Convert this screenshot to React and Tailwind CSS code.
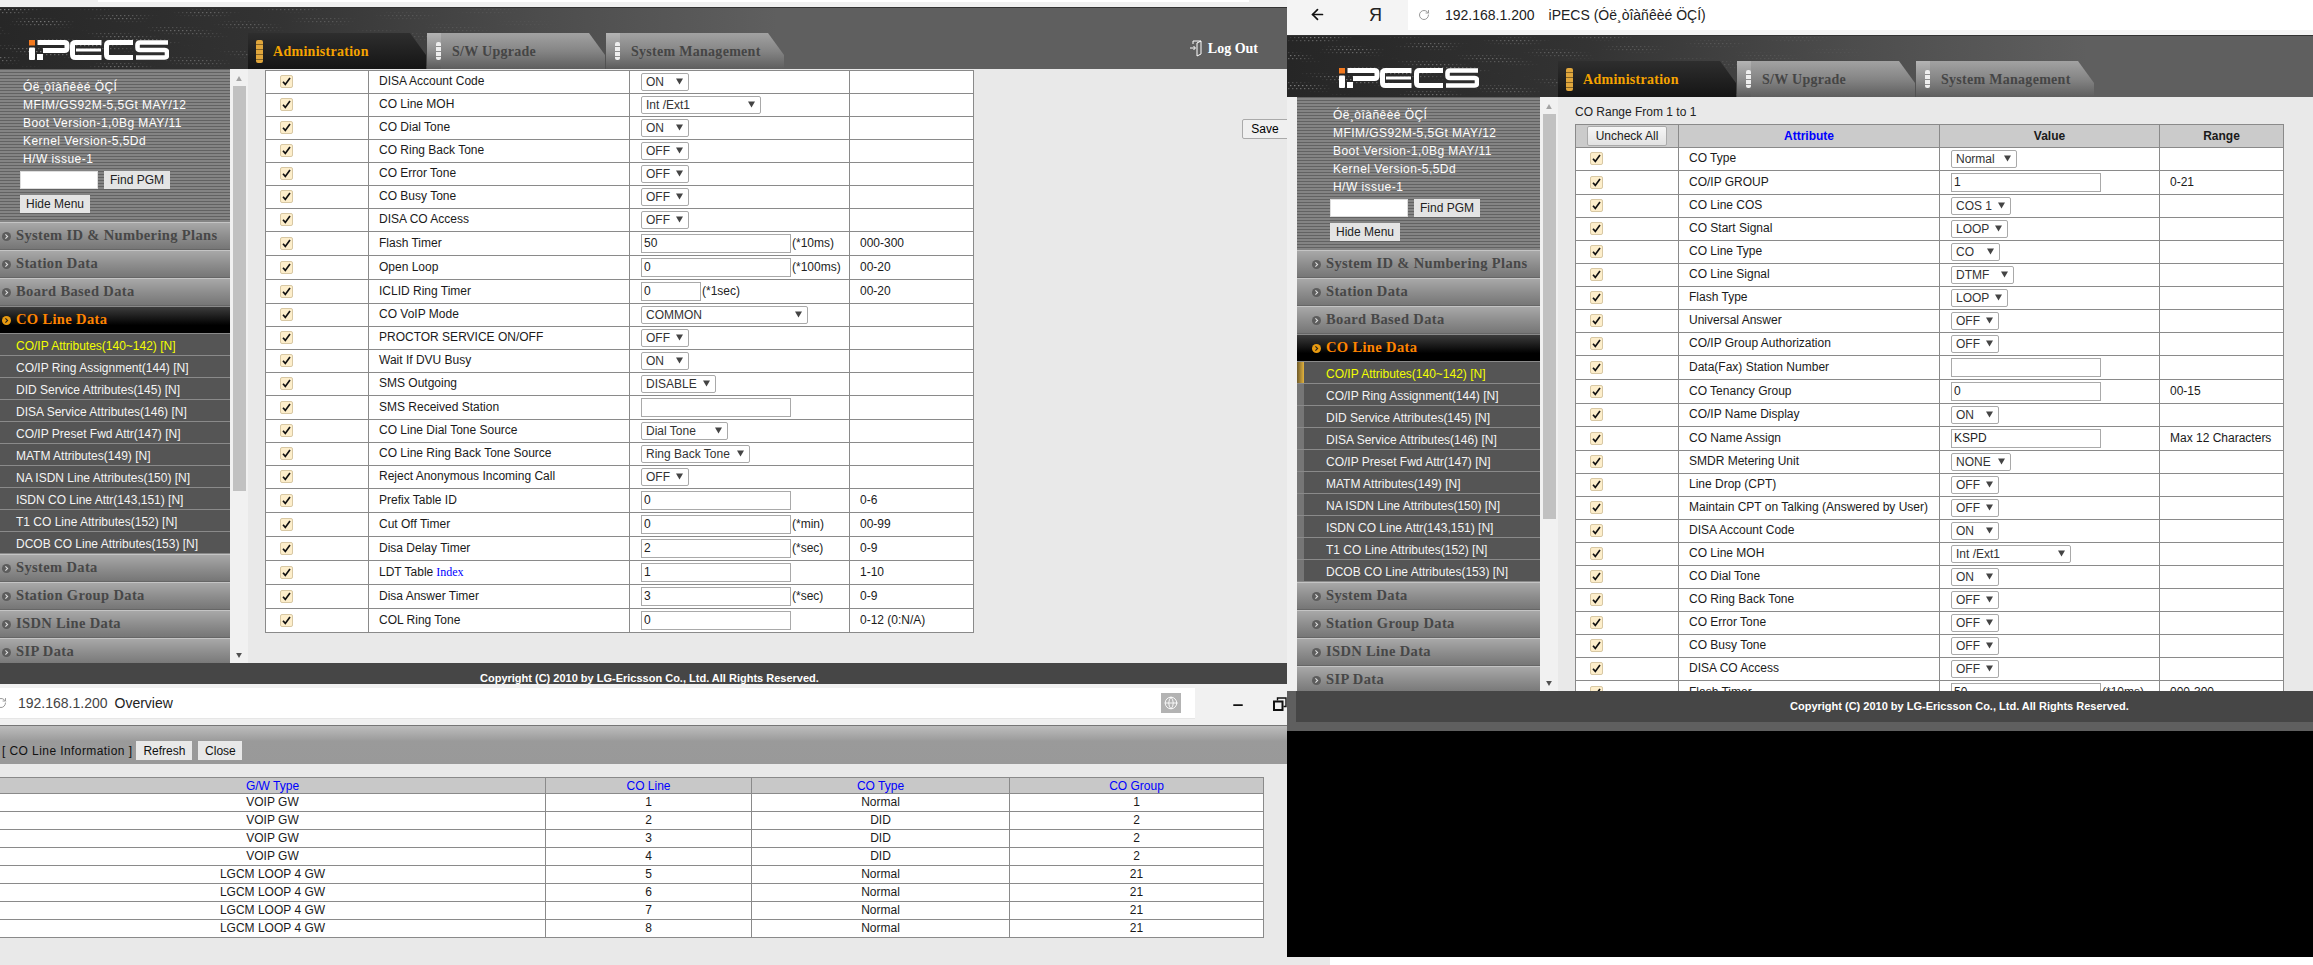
import { ArrowLeft, RotateCw, Globe, Minus } from "lucide-react";

const FONT = "font-['Liberation_Sans',Arial,sans-serif]";
const SERIF = "font-['Liberation_Serif',serif]";

const INFO = [
  "Óë¸òîàñêèé ÖÇÍ",
  "MFIM/GS92M-5,5Gt MAY/12",
  "Boot Version-1,0Bg MAY/11",
  "Kernel Version-5,5Dd",
  "H/W issue-1",
];

const MENU_TOP = ["System ID & Numbering Plans", "Station Data", "Board Based Data"];
const MENU_BOTTOM = ["System Data", "Station Group Data", "ISDN Line Data", "SIP Data"];
const SUB_MENU = [
  "CO/IP Attributes(140~142) [N]",
  "CO/IP Ring Assignment(144) [N]",
  "DID Service Attributes(145) [N]",
  "DISA Service Attributes(146) [N]",
  "CO/IP Preset Fwd Attr(147) [N]",
  "MATM Attributes(149) [N]",
  "NA ISDN Line Attributes(150) [N]",
  "ISDN CO Line Attr(143,151) [N]",
  "T1 CO Line Attributes(152) [N]",
  "DCOB CO Line Attributes(153) [N]",
];

const sel = (label, value, w = "w-[48px]") => ({ label, value, w, kind: "select" });
const inp = (label, value, range, suffix, w = "w-[150px]") => ({ label, value, range, suffix, w, kind: "input" });

const LEFT_ROWS = [
  sel("DISA Account Code", "ON"),
  sel("CO Line MOH", "Int /Ext1", "w-[120px]"),
  sel("CO Dial Tone", "ON"),
  sel("CO Ring Back Tone", "OFF"),
  sel("CO Error Tone", "OFF"),
  sel("CO Busy Tone", "OFF"),
  sel("DISA CO Access", "OFF"),
  inp("Flash Timer", "50", "000-300", "(*10ms)"),
  inp("Open Loop", "0", "00-20", "(*100ms)"),
  inp("ICLID Ring Timer", "0", "00-20", "(*1sec)", "w-[60px]"),
  sel("CO VoIP Mode", "COMMON", "w-[167px]"),
  sel("PROCTOR SERVICE ON/OFF", "OFF"),
  sel("Wait If DVU Busy", "ON"),
  sel("SMS Outgoing", "DISABLE", "w-[75px]"),
  inp("SMS Received Station", ""),
  sel("CO Line Dial Tone Source", "Dial Tone", "w-[87px]"),
  sel("CO Line Ring Back Tone Source", "Ring Back Tone", "w-[109px]"),
  sel("Reject Anonymous Incoming Call", "OFF"),
  inp("Prefix Table ID", "0", "0-6"),
  inp("Cut Off Timer", "0", "00-99", "(*min)"),
  inp("Disa Delay Timer", "2", "0-9", "(*sec)"),
  { ...inp("LDT Table", "1", "1-10"), link: "Index" },
  inp("Disa Answer Timer", "3", "0-9", "(*sec)"),
  inp("COL Ring Tone", "0", "0-12 (0:N/A)"),
];

const RIGHT_ROWS = [
  sel("CO Type", "Normal", "w-[66px]"),
  inp("CO/IP GROUP", "1", "0-21"),
  sel("CO Line COS", "COS 1", "w-[60px]"),
  sel("CO Start Signal", "LOOP", "w-[57px]"),
  sel("CO Line Type", "CO", "w-[49px]"),
  sel("CO Line Signal", "DTMF", "w-[63px]"),
  sel("Flash Type", "LOOP", "w-[57px]"),
  sel("Universal Answer", "OFF"),
  sel("CO/IP Group Authorization", "OFF"),
  inp("Data(Fax) Station Number", ""),
  inp("CO Tenancy Group", "0", "00-15"),
  sel("CO/IP Name Display", "ON"),
  inp("CO Name Assign", "KSPD", "Max 12 Characters"),
  sel("SMDR Metering Unit", "NONE", "w-[60px]"),
  sel("Line Drop (CPT)", "OFF"),
  sel("Maintain CPT on Talking (Answered by User)", "OFF"),
  sel("DISA Account Code", "ON"),
  sel("CO Line MOH", "Int /Ext1", "w-[120px]"),
  sel("CO Dial Tone", "ON"),
  sel("CO Ring Back Tone", "OFF"),
  sel("CO Error Tone", "OFF"),
  sel("CO Busy Tone", "OFF"),
  sel("DISA CO Access", "OFF"),
  inp("Flash Timer", "50", "000-300", "(*10ms)"),
];

const CO_LINES = [
  ["VOIP GW", 1, "Normal", 1],
  ["VOIP GW", 2, "DID", 2],
  ["VOIP GW", 3, "DID", 2],
  ["VOIP GW", 4, "DID", 2],
  ["LGCM LOOP 4 GW", 5, "Normal", 21],
  ["LGCM LOOP 4 GW", 6, "Normal", 21],
  ["LGCM LOOP 4 GW", 7, "Normal", 21],
  ["LGCM LOOP 4 GW", 8, "Normal", 21],
];

// dotted moire of the header artwork
const DOTS = [];
for (let y = 1; y < 62; y += 3) {
  for (let x = 1; x < 620; x += 4) {
    const v = Math.sin(x * 0.045 + Math.sin(y * 0.09) * 2) * Math.cos(y * 0.32 - x * 0.02);
    if (v > 0.05) DOTS.push({ x: x + (y % 2) * 2, y, o: v * 0.42 * (1 - x / 620) });
  }
}

const HeaderDots = () => (
  <svg className="absolute inset-0 w-full h-full" aria-hidden="true">
    {DOTS.map((d) => (
      <rect key={`${d.x}-${d.y}`} x={d.x} y={d.y} width="1.4" height="1.2" fill="#fff" opacity={d.o} />
    ))}
  </svg>
);

const Logo = () => (
  <svg className="w-[140px] h-[20px] shrink-0" viewBox="0 0 140 20" fill="none" aria-label="iPECS">
    <rect x="0" y="0" width="6" height="5.5" fill="#f47a1f" />
    <rect x="0" y="7.5" width="6" height="12.5" rx="1" fill="#fff" />
    <path d="M8.5 2.5H35.5Q38 2.5 38 5V8Q38 10.5 35.5 10.5H14" stroke="#fff" strokeWidth="5" />
    <rect x="8" y="14" width="6" height="6" fill="#fff" />
    <path d="M72.5 2.5H46.5Q43.5 2.5 43.5 5.5V14.5Q43.5 17.5 46.5 17.5H72.5" stroke="#fff" strokeWidth="5" />
    <rect x="47" y="8.5" width="25" height="3" fill="#fff" />
    <path d="M104 2.5H80.5Q77.5 2.5 77.5 5.5V14.5Q77.5 17.5 80.5 17.5H104" stroke="#fff" strokeWidth="5" />
    <path d="M139 2.5H111Q108.5 2.5 108.5 5V7.5Q108.5 10 111 10H135.5Q138 10 138 12.5V15Q138 17.5 135.5 17.5H107" stroke="#fff" strokeWidth="4.6" />
  </svg>
);

const TabMark = ({ active }) => (
  <span
    className={`shrink-0 rounded-[2px] bg-[repeating-linear-gradient(180deg,transparent_0,transparent_4px,#0006_4px,#0006_5px)] ${
      active ? "w-[7px] h-[23px] bg-[#e0a63c] ml-[8px]" : "w-[5px] h-[18px] bg-[#eee] ml-[9px]"
    }`}
  />
);

const Tab = ({ label, active }) => (
  <div
    className={`w-[178px] h-[36px] flex items-center [clip-path:polygon(0_0,162px_0,178px_22px,178px_100%,0_100%)] ${
      active
        ? "bg-[linear-gradient(180deg,#2e2e2e,#151515)]"
        : "bg-[linear-gradient(180deg,#a2a2a2,#858585_50%,#5e5e5e)]"
    }`}
  >
    {active ? (
      <TabMark active />
    ) : (
      <span className="w-[14px] h-full shrink-0 flex items-center bg-[linear-gradient(180deg,#b4b4b4,#8f8f8f_50%,#5a5a5a)]">
        <TabMark />
      </span>
    )}
    <span
      className={`${SERIF} font-bold text-[14px] tracking-[0.28px] whitespace-nowrap ${
        active ? "ml-[10px] text-[#f5a300]" : "ml-[11px] text-[#454545]"
      }`}
    >
      {label}
    </span>
  </div>
);

const Bullet = ({ active }) => (
  <svg className="w-[9px] h-[9px] shrink-0" viewBox="0 0 9 9">
    <circle cx="4.5" cy="4.5" r="4.5" fill={active ? "#e89a10" : "#5d5d5d"} />
    <path d="M3.4 2.3L5.6 4.5L3.4 6.7" fill="none" stroke={active ? "#222" : "#ddd"} strokeWidth="1.1" />
  </svg>
);

const MenuHead = ({ label, active }) => (
  <div
    className={`h-[28px] shrink-0 flex items-center gap-[5px] pl-[15px] border-t border-b ${
      active
        ? "bg-[linear-gradient(180deg,#3c3c3c,#000_70%)] border-t-[#8a8a8a] border-b-[#8a8a8a]"
        : "bg-[linear-gradient(180deg,#a8a8a8,#8e8e8e_50%,#767676)] border-t-[#c4c4c4] border-b-[#666]"
    }`}
  >
    <Bullet active={active} />
    <span
      className={`${SERIF} font-bold text-[14.5px] tracking-[0.36px] whitespace-nowrap ${
        active ? "text-[#ff8400]" : "text-[#474747]"
      }`}
    >
      {label}
    </span>
  </div>
);

const Sidebar = () => (
  <aside className="w-[243px] shrink-0 flex flex-col bg-[#555]">
    <div className="h-[153px] shrink-0 pl-[36px] pt-[9px] text-white text-[12px] leading-[18px] tracking-[0.45px] bg-[repeating-linear-gradient(180deg,#626262_0,#626262_1px,#848484_1px,#848484_3px)]">
      {INFO.map((line) => (
        <div key={line} className="whitespace-nowrap">{line}</div>
      ))}
      <div className="flex items-center gap-[6px] -ml-[3px] mt-[3px]">
        <input className="w-[78px] h-[18px] bg-white border border-[#ddd]" readOnly />
        <button className="w-[66px] h-[18px] bg-[#e4e4e4] text-[#222] text-[12px] leading-[18px] tracking-normal">Find PGM</button>
      </div>
      <button className="block w-[70px] h-[18px] -ml-[3px] mt-[6px] bg-[#e4e4e4] text-[#222] text-[12px] leading-[18px] tracking-normal">Hide Menu</button>
    </div>
    {MENU_TOP.map((label) => <MenuHead key={label} label={label} />)}
    <MenuHead label="CO Line Data" active />
    {SUB_MENU.map((label, i) => (
      <div key={label} className="h-[22px] shrink-0 flex bg-[#555] border-b border-[#8a8a8a]">
        <span className={`w-[7px] shrink-0 ${i === 0 ? "bg-[linear-gradient(90deg,#6e5a2c,#e2b23c)]" : "bg-[#767676]"}`} />
        <span className={`pl-[22px] text-[12px] leading-[24px] whitespace-nowrap ${i === 0 ? "text-[#f2ff00]" : "text-[#f4f4f4]"}`}>
          {label}
        </span>
      </div>
    ))}
    {MENU_BOTTOM.map((label) => <MenuHead key={label} label={label} />)}
  </aside>
);

const Triangle = ({ className }) => (
  <svg className={className} viewBox="0 0 8 7" aria-hidden="true">
    <path d="M0 0H8L4 7Z" fill="currentColor" />
  </svg>
);

const ScrollBar = () => (
  <div className="w-[18px] shrink-0 flex flex-col items-center bg-[#f1f1f1] relative">
    <Triangle className="w-[8px] h-[5px] mt-[7px] text-[#a3a3a3] rotate-180" />
    <div className="w-[13px] h-[405px] mt-[5px] bg-[#c1c1c1]" />
    <Triangle className="w-[8px] h-[5px] mt-[162px] text-[#505050]" />
  </div>
);

const CheckBox = () => (
  <span className="w-[13px] h-[13px] flex items-center justify-center rounded-[2px] bg-[#fdeecb] border border-[#d8c8a4] ml-[14px]">
    <svg className="w-[9px] h-[9px]" viewBox="0 0 9 9" fill="none" aria-hidden="true">
      <path d="M1 4.8L3.3 7.4L8 1" stroke="#111" strokeWidth="1.7" />
    </svg>
  </span>
);

const SelectBox = ({ value, w }) => (
  <span className={`relative block h-[18px] ${w}`}>
    <select
      defaultValue={value}
      className="appearance-none block w-full h-full pl-[4px] bg-white border border-[#a9a9a9] rounded-[2px] text-[12px] leading-[16px] text-[#333]"
    >
      <option>{value}</option>
    </select>
    <Triangle className="absolute right-[6px] top-[5px] w-[7px] h-[7px] text-[#444]" />
  </span>
);

const ValueCell = ({ row }) =>
  row.kind === "select" ? (
    <SelectBox value={row.value} w={row.w} />
  ) : (
    <span className="flex items-center">
      <input
        readOnly
        value={row.value}
        className={`${row.w} h-[19px] px-[2px] bg-white border border-[#a9a9a9] text-[12px] text-[#222]`}
      />
      {row.suffix && <span className="ml-[1px] text-[#222]">{row.suffix}</span>}
    </span>
  );

const AttrRow = ({ row }) => (
  <tr className={row.kind === "input" ? "h-[24px]" : "h-[23px]"}>
    <td className="border border-[#8a8a8a] p-0 pb-[1px]"><CheckBox /></td>
    <td className="border border-[#8a8a8a] p-0 pl-[10px] pb-[2px] whitespace-nowrap">
      {row.label}
      {row.link && <span className={`${SERIF} text-[#0000ff]`}> {row.link}</span>}
    </td>
    <td className="border border-[#8a8a8a] p-0 pl-[11px] pb-[1px]"><ValueCell row={row} /></td>
    <td className="border border-[#8a8a8a] p-0 pl-[10px] pb-[1px] whitespace-nowrap">{row.range}</td>
  </tr>
);

const AttrTable = ({ rows, head }) => (
  <table className="w-[708px] shrink-0 table-fixed border-collapse bg-white text-[12px] text-[#1a1a1a]">
    <colgroup>
      <col className="w-[103px]" />
      <col className="w-[261px]" />
      <col className="w-[220px]" />
      <col className="w-[124px]" />
    </colgroup>
    {head && (
      <thead>
        <tr className="h-[23px] bg-[#cbcbcb] font-bold">
          <th className="border border-[#8a8a8a] p-0 pl-[11px] text-left">
            <button className="w-[80px] h-[20px] bg-[linear-gradient(180deg,#f6f6f6,#e2e2e2)] border border-[#aaa] rounded-[2px] font-normal">Uncheck All</button>
          </th>
          <th className="border border-[#8a8a8a] p-0 text-[#0000ff]">Attribute</th>
          <th className="border border-[#8a8a8a] p-0">Value</th>
          <th className="border border-[#8a8a8a] p-0">Range</th>
        </tr>
      </thead>
    )}
    <tbody>
      {rows.map((row) => <AttrRow key={row.label} row={row} />)}
    </tbody>
  </table>
);

const LogOut = () => (
  <div className="ml-auto mr-[29px] mb-[10px] flex items-center gap-[6px]">
    <svg className="w-[12px] h-[17px]" viewBox="0 0 12 17" fill="none" aria-hidden="true">
      <path d="M3 4V1H11V14L7 16V3" stroke="#fff" />
      <path d="M7 3L11 1M0 8H5M3.5 6L5.5 8L3.5 10" stroke="#fff" />
    </svg>
    <span className={`${SERIF} font-bold text-[14px] text-white whitespace-nowrap`}>Log Out</span>
  </div>
);

const IpecsFrame = ({ children, logout }) => (
  <div className={`${FONT} h-full flex flex-col`}>
    <header className="relative h-[62px] shrink-0 flex items-end border-t border-[#333] bg-[linear-gradient(90deg,#262626_0,#333_300px,#4c4c4c_560px,#5f5f5f_800px)]">
      <HeaderDots />
      <div className="relative flex items-end w-full">
        <div className="pl-[52px] pb-[9px]"><Logo /></div>
        <div className="ml-[79px] flex gap-[1px]">
          <Tab label="Administration" active />
          <Tab label="S/W Upgrade" />
          <Tab label="System Management" />
        </div>
        {logout && <LogOut />}
      </div>
    </header>
    <div className="h-[594px] shrink-0 flex pl-[10px] bg-[#f0f0f0] overflow-hidden">
      <Sidebar />
      <ScrollBar />
      <main className="flex-1 min-w-0 flex bg-[#e9e9e9] pl-[17px] overflow-hidden">{children}</main>
    </div>
    <div className="pl-[9px] pb-[9px] bg-[#5f5f5f]">
      <footer className="h-[31px] pl-[494px] pt-[8px] bg-[#464646] text-white font-bold text-[11px] leading-[14px] whitespace-nowrap">
        Copyright (C) 2010 by LG-Ericsson Co., Ltd. All Rights Reserved.
      </footer>
    </div>
  </div>
);

const LeftAdmin = () => (
  <section className="absolute left-0 top-0 w-[1287px] h-[684px] overflow-hidden bg-[#f0f0f0]">
    <div className="h-[7px]">
      <div className="ml-[98px] w-[1151px] h-[2px] bg-white" />
    </div>
    <div className="-ml-[23px] w-[1310px] h-[677px]">
      <IpecsFrame logout>
        <div className="pt-[1px]"><AttrTable rows={LEFT_ROWS} /></div>
        <button className="w-[60px] h-[20px] shrink-0 ml-[268px] mt-[50px] pr-[14px] bg-[#f0f0f0] border border-[#aaa] rounded-[2px] text-[12px]">Save</button>
      </IpecsFrame>
    </div>
  </section>
);

const RightAdmin = () => (
  <section className={`${FONT} absolute left-[1287px] top-0 w-[1026px] h-[731px] overflow-hidden`}>
    <div className="h-[35px] flex bg-[#f4f4f4]">
      <ArrowLeft className="w-[17px] h-[17px] mt-[6px] ml-[22px] text-[#111]" strokeWidth={2.4} />
      <span className="w-[39px] ml-[43px] pt-[5px] text-[18px] leading-[20px] text-[#222]">Я</span>
      <div className="flex-1 h-[30px] flex items-center bg-white text-[14px]">
        <RotateCw className="w-[12px] h-[12px] ml-[10px] text-[#999]" />
        <span className="ml-[15px] text-[#222]">192.168.1.200</span>
        <span className="ml-[14px] text-[#222]">iPECS (Óë¸òîàñêèé ÖÇÍ)</span>
      </div>
    </div>
    <div className="h-[696px]">
      <IpecsFrame>
        <div>
          <div className="h-[27px] pt-[8px] text-[12px] leading-[14px] text-[#222]">CO Range From 1 to 1</div>
          <AttrTable rows={RIGHT_ROWS} head />
        </div>
      </IpecsFrame>
    </div>
  </section>
);

const Overview = () => (
  <section className={`${FONT} absolute left-0 top-[684px] w-[1287px] h-[281px] overflow-hidden flex flex-col bg-[#e9e9e9]`}>
    <div className="h-[41px] shrink-0 flex bg-[#f1f1f1]">
      <div className="w-[1195px] h-[31px] mt-[4px] flex items-center bg-white border-b border-[#e6e6e6]">
        <RotateCw className="w-[12px] h-[12px] -ml-[5px] text-[#999]" />
        <span className="ml-[11px] text-[14px] text-[#444]">192.168.1.200</span>
        <span className="ml-[7px] text-[14px] text-[#222]">Overview</span>
        <span className="ml-auto mr-[14px] w-[20px] h-[20px] flex items-center justify-center bg-[#b3b3b3]">
          <Globe className="w-[14px] h-[14px] text-white" strokeWidth={1.5} />
        </span>
      </div>
      <Minus className="w-[14px] h-[14px] mt-[14px] ml-[36px] text-[#111]" strokeWidth={3} />
      <svg className="w-[14px] h-[14px] shrink-0 mt-[13px] ml-[28px]" viewBox="0 0 14 14" fill="none" aria-hidden="true">
        <rect x="1" y="4.5" width="8.5" height="8.5" stroke="#111" strokeWidth="2" />
        <path d="M4.5 3.5V1H13V9.5H10.5" stroke="#111" strokeWidth="1.4" />
      </svg>
    </div>
    <div className="h-[39px] shrink-0 flex items-center pl-[2px] pt-[11px] border-t border-[#777] bg-[linear-gradient(180deg,#bdbdbd,#9a9a9a_40%,#999)] text-[12px] text-[#111]">
      <span className="tracking-[0.42px]">[ CO Line Information ]</span>
      <button className="w-[56px] h-[19px] ml-[4px] bg-[#e8e8e8]">Refresh</button>
      <button className="w-[44px] h-[19px] ml-[6px] bg-[#e8e8e8]">Close</button>
    </div>
    <div className="pt-[13px] -ml-[1px]">
      <table className="w-[1264px] table-fixed border-collapse bg-white text-[12px] text-center text-[#1a1a1a]">
        <colgroup>
          <col className="w-[546px]" />
          <col className="w-[206px]" />
          <col className="w-[258px]" />
          <col className="w-[254px]" />
        </colgroup>
        <thead>
          <tr className="h-[16px] bg-[#c8c8c8] text-[#0000ff]">
            {["G/W Type", "CO Line", "CO Type", "CO Group"].map((h) => (
              <th key={h} className="border border-[#8a8a8a] p-0 font-normal leading-[14px]">{h}</th>
            ))}
          </tr>
        </thead>
        <tbody>
          {CO_LINES.map((line) => (
            <tr key={line[1]} className="h-[18px]">
              {line.map((v, i) => (
                <td key={i} className="border border-[#8a8a8a] p-0 pb-[1px] leading-[14px]">{v}</td>
              ))}
            </tr>
          ))}
        </tbody>
      </table>
    </div>
  </section>
);

export default function App() {
  return (
    <div className="relative w-[2313px] h-[965px] overflow-hidden bg-white">
      <LeftAdmin />
      <Overview />
      <RightAdmin />
      {/* blacked out area under the right window */}
      <div className="absolute left-[1287px] top-[731px] w-[1026px] h-[226px] bg-black" />
      <div className="absolute left-[1287px] top-[957px] w-[43px] h-[8px] bg-[#e9e9e9]" />
    </div>
  );
}
